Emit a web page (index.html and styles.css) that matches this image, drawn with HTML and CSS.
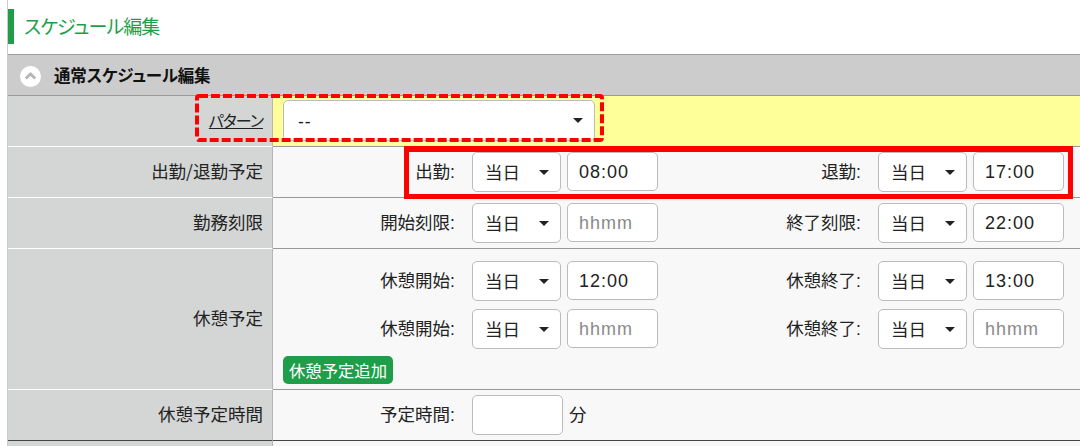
FILE: index.html

```html
<!DOCTYPE html>
<html lang="ja">
<head>
  <meta charset="UTF-8">
  <title>スケジュール編集</title>
  <link rel="stylesheet" href="styles.css">
</head>
<body>
  <div class="page">
    <h1 class="title">スケジュール編集</h1>

    <div class="section-head">
      <span class="toggle">
        <svg width="21" height="21" viewBox="0 0 21 21"><path d="M5.8 12.5 L10.5 8 L15.2 12.5" fill="none" stroke="#b5b5b5" stroke-width="2.8"/></svg>
      </span>
      通常スケジュール編集
    </div>

    <div class="row row-pattern">
      <div class="label"><a href="#">パターン</a></div>
      <div class="value value-pattern">
        <span class="select-wrap select-wide"><select><option>--</option></select></span>
      </div>
    </div>

    <div class="row row-std">
      <div class="label">出勤/退勤予定</div>
      <div class="value">
        <div class="pairs">
          <div class="pair">
            <label>出勤:</label>
            <span class="select-wrap"><select><option>当日</option></select></span>
            <input type="text" value="08:00">
          </div>
          <div class="pair">
            <label>退勤:</label>
            <span class="select-wrap"><select><option>当日</option></select></span>
            <input type="text" value="17:00">
          </div>
        </div>
      </div>
    </div>

    <div class="row row-std">
      <div class="label">勤務刻限</div>
      <div class="value">
        <div class="pairs">
          <div class="pair">
            <label>開始刻限:</label>
            <span class="select-wrap"><select><option>当日</option></select></span>
            <input type="text" placeholder="hhmm">
          </div>
          <div class="pair">
            <label>終了刻限:</label>
            <span class="select-wrap"><select><option>当日</option></select></span>
            <input type="text" value="22:00">
          </div>
        </div>
      </div>
    </div>

    <div class="row row-break">
      <div class="label">休憩予定</div>
      <div class="value value-break">
        <div class="pairs">
          <div class="pair">
            <label>休憩開始:</label>
            <span class="select-wrap"><select><option>当日</option></select></span>
            <input type="text" value="12:00">
          </div>
          <div class="pair">
            <label>休憩終了:</label>
            <span class="select-wrap"><select><option>当日</option></select></span>
            <input type="text" value="13:00">
          </div>
          <div class="pair">
            <label>休憩開始:</label>
            <span class="select-wrap"><select><option>当日</option></select></span>
            <input type="text" placeholder="hhmm">
          </div>
          <div class="pair">
            <label>休憩終了:</label>
            <span class="select-wrap"><select><option>当日</option></select></span>
            <input type="text" placeholder="hhmm">
          </div>
        </div>
        <button class="btn-add" type="button">休憩予定追加</button>
      </div>
    </div>

    <div class="row row-std row-last">
      <div class="label">休憩予定時間</div>
      <div class="value">
        <div class="pairs">
          <div class="pair pair-left">
            <label>予定時間:</label>
            <input class="input-minutes" type="text">
            <span class="unit">分</span>
          </div>
        </div>
      </div>
    </div>

    <div class="row row-tail">
      <div class="label"></div>
      <div class="value"></div>
    </div>

    <svg class="mark mark-dashed" width="409" height="48" viewBox="0 0 409 48">
      <rect x="2" y="2" width="405" height="44" rx="2" fill="none" stroke="#f00" stroke-width="4" stroke-dasharray="9 3"/>
    </svg>
    <div class="mark mark-solid"></div>
  </div>
</body>
</html>
```

FILE: styles.css

```css
html, body {
  margin: 0;
  height: 100%;
  overflow: hidden;
  background: #fff;
}
body {
  font-family: "Liberation Sans", "Noto Sans CJK JP", sans-serif;
  font-size: 17.5px;
  font-feature-settings: "palt";
  color: #222;
}
.page {
  position: relative;
  box-sizing: border-box;
  margin-left: 7px;
  border-left: 1px solid #ccc;
  padding-top: 9px;
  height: 446px;
}

.title {
  margin: 0 0 10px 0;
  height: 35px;
  border-left: 6px solid #1f9e4a;
  padding-left: 10px;
  font-size: 19px;
  font-weight: normal;
  letter-spacing: -0.9px;
  line-height: 37px;
  color: #1f9e4a;
}

.section-head {
  display: flex;
  align-items: center;
  height: 40px;
  border-top: 1px solid #999;
  border-bottom: 1px solid #999;
  background: #ccc;
  font-size: 16.5px;
  font-weight: bold;
  letter-spacing: -0.2px;
  color: #111;
}
.toggle {
  display: flex;
  width: 21px;
  height: 21px;
  margin: 3px 13px 0 12px;
  border-radius: 50%;
  background: #fff;
}

.row {
  display: flex;
}
.label {
  box-sizing: border-box;
  width: 265px;
  padding: 0 9px 3px 0;
  display: flex;
  align-items: center;
  justify-content: flex-end;
  background: #d4d6d6;
  border-right: 1px solid #b5b5b5;
  border-bottom: 1px solid #fff;
  font-family: "Noto Sans CJK JP", sans-serif;
}
.label a {
  font-size: 16px;
  letter-spacing: -1px;
  color: #222;
}
.value {
  box-sizing: border-box;
  flex: 1;
  background: #f8f8f8;
  border-bottom: 1px solid #999;
}

.row-pattern {
  height: 51px;
}
.value-pattern {
  background: #ffff99;
  padding: 4px 0 0 10px;
}
.row-std {
  height: 51px;
}
.row-std .value {
  display: flex;
  align-items: center;
}
.row-break {
  height: 141px;
}
.value-break {
  padding-top: 12px;
}
.row-last .label,
.row-last .value {
  height: 52px;
  border-bottom: 2px solid #444;
}
.row-tail {
  height: 10px;
}
.row-tail .label,
.row-tail .value {
  border-bottom: 0;
}

.pairs {
  flex: 1;
  display: grid;
  grid-template-columns: 385px 385px;
  column-gap: 21px;
  row-gap: 8px;
}
.pair {
  display: flex;
  align-items: flex-start;
  justify-content: flex-end;
}
.pair label {
  margin-right: 17px;
  line-height: 40px;
}

.select-wrap {
  position: relative;
  display: block;
  width: 89px;
  height: 40px;
  margin-right: 6px;
}
.select-wide {
  width: 312px;
  height: 41px;
}
.select-wide select {
  padding-left: 14px;
  letter-spacing: 1px;
}
.select-wrap::after {
  content: "";
  position: absolute;
  top: 18px;
  right: 12px;
  border-top: 5px solid #222;
  border-left: 5px solid transparent;
  border-right: 5px solid transparent;
  pointer-events: none;
}
select {
  appearance: none;
  box-sizing: border-box;
  width: 100%;
  height: 100%;
  padding: 2px 0 0 12px;
  border: 1px solid #bbb;
  border-radius: 5px;
  background: #fff;
  font: inherit;
  color: #222;
}
input {
  box-sizing: border-box;
  width: 91px;
  height: 39px;
  padding: 1px 11px 0;
  border: 1px solid #bbb;
  border-radius: 5px;
  background: #fff;
  font: inherit;
  font-size: 18px;
  letter-spacing: 1px;
  color: #222;
}
input::placeholder {
  color: #8a8a8a;
}
.input-minutes {
  width: 91px;
  height: 40px;
}
.pair-left {
  grid-column: 1;
  justify-content: flex-start;
  padding-left: 107px;
}
.unit {
  margin-left: 6px;
  line-height: 40px;
}

.btn-add {
  display: block;
  margin: 7px 0 0 10px;
  height: 28px;
  width: 110px;
  padding: 0;
  border: 0;
  border-radius: 5px;
  background: #1f9e4a;
  color: #fff;
  font: inherit;
  font-size: 16.33px;
}

.mark {
  position: absolute;
  box-sizing: border-box;
  pointer-events: none;
}
.mark-dashed {
  left: 187px;
  top: 94px;
}
.mark-solid {
  left: 396px;
  top: 146px;
  width: 669px;
  height: 53px;
  border: 5px solid #f00;
  border-top-width: 6px;
}
```
